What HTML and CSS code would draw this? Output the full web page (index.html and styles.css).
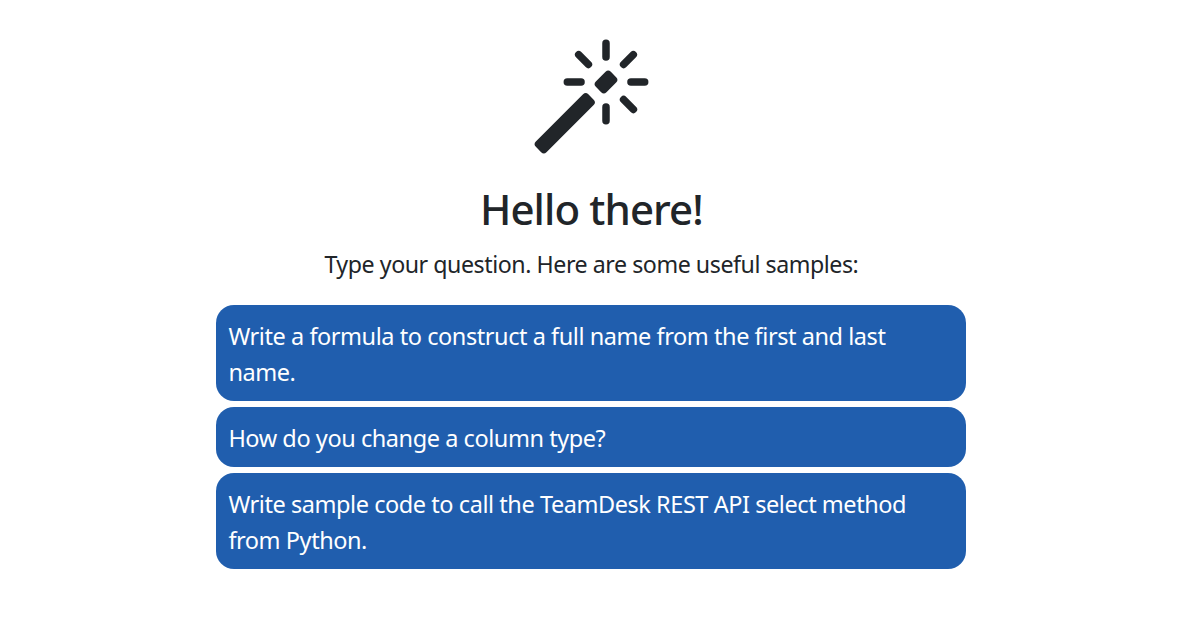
FILE: index.html
```html
<!DOCTYPE html>
<html lang="en">
<head>
    <meta charset="UTF-8">
    <meta name="viewport" content="width=device-width, initial-scale=1.0">
    <title>Hello there!</title>
    <link rel="stylesheet" href="styles.css">
</head>
<body>
    <main class="welcome">
        <svg class="welcome-icon" viewBox="0 0 16 16" fill="currentColor" aria-hidden="true">
            <path d="M9.5 2.672a.5.5 0 1 0 1 0V.843a.5.5 0 0 0-1 0zm4.5.035A.5.5 0 0 0 13.293 2L12 3.293a.5.5 0 1 0 .707.707zM7.293 4A.5.5 0 1 0 8 3.293L6.707 2A.5.5 0 0 0 6 2.707zm-.621 2.5a.5.5 0 1 0 0-1H4.843a.5.5 0 1 0 0 1zm8.485 0a.5.5 0 1 0 0-1h-1.829a.5.5 0 0 0 0 1zM13.293 10A.5.5 0 1 0 14 9.293L12.707 8a.5.5 0 1 0-.707.707zM9.5 11.157a.5.5 0 0 0 1 0V9.328a.5.5 0 0 0-1 0zm1.854-5.097a.5.5 0 0 0 0-.706l-.708-.708a.5.5 0 0 0-.707 0L8.646 5.94a.5.5 0 0 0 0 .707l.708.708a.5.5 0 0 0 .707 0l1.293-1.293Zm-3 3a.5.5 0 0 0 0-.706l-.708-.708a.5.5 0 0 0-.707 0L.646 13.94a.5.5 0 0 0 0 .707l.707.707a.5.5 0 0 0 .707 0z"/>
        </svg>
        <h1>Hello there!</h1>
        <p class="lead">Type your question. Here are some useful samples:</p>
        <div class="samples">
            <a href="#" class="sample">Write a formula to construct a full name from the first and last name.</a>
            <a href="#" class="sample">How do you change a column type?</a>
            <a href="#" class="sample">Write sample code to call the TeamDesk REST API select method from Python.</a>
        </div>
    </main>
</body>
</html>
```
FILE: styles.css
```css
:root {
    --primary: #205eae;
    --text: #212529;
}

* {
    margin: 0;
    padding: 0;
    box-sizing: border-box;
}

body {
    font-family: "Segoe UI", "Noto Sans", "Open Sans", sans-serif;
    font-size: 23.5px;
    line-height: 36px;
    color: var(--text);
    background-color: white;
}

.welcome {
    display: flex;
    flex-direction: column;
    align-items: center;
    width: 750px;
    margin-left: 216.4px;
    padding-top: 37px;
}

.welcome-icon {
    width: 120px;
    height: 120px;
}

h1 {
    margin-top: 27px;
    font-size: 42px;
    font-weight: 500;
    line-height: 50px;
    letter-spacing: -0.9px;
}

.lead {
    margin-top: 12px;
    font-size: 23.2px;
    font-weight: 400;
    letter-spacing: -0.45px;
}

.samples {
    display: flex;
    flex-direction: column;
    gap: 6px;
    width: 100%;
    margin-top: 23px;
}

.sample {
    padding: 13px 12px 11px;
    border-radius: 18px;
    background-color: var(--primary);
    color: white;
    letter-spacing: -0.44px;
    text-decoration: none;
}

.sample:hover {
    background-color: #1b5094;
}
```
